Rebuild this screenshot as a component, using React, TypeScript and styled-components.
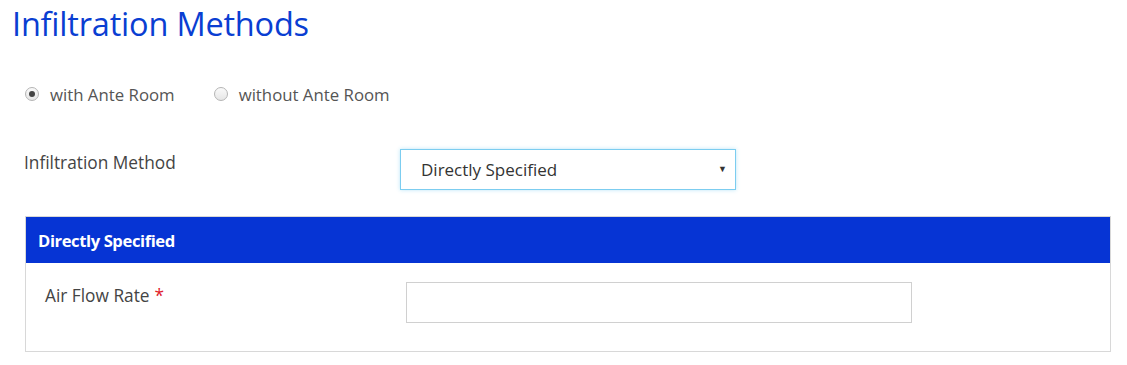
import React, { useState } from 'react';
import styled, { createGlobalStyle } from 'styled-components';

const GlobalStyle = createGlobalStyle`
    body {
        margin: 0;
        background: #fff;
        font-family: 'Open Sans', 'Noto Sans', sans-serif;
        color: #444;
    }
`;

const Page = styled.div`
    padding: 4px 16px 0 12px;
    width: 1100px;
`;

const Title = styled.h1`
    margin: 0;
    font-size: 32.5px;
    font-weight: 500;
    color: #0a3ed2;
    letter-spacing: -0.2px;
    line-height: 40px;
`;

const RadioRow = styled.div`
    display: flex;
    gap: 39px;
    margin: 35px 0 0 13px;
    height: 30px;
    align-items: center;
`;

const RadioLabel = styled.label`
    display: flex;
    align-items: center;
    gap: 11px;
    font-size: 16.8px;
    color: #555;
    cursor: pointer;
`;

const RadioDot = styled.span<{ checked: boolean }>`
    width: 12px;
    height: 12px;
    border-radius: 50%;
    border: 1px solid #b5b5b5;
    background: linear-gradient(#fafafa, #e6e6e6);
    display: flex;
    align-items: center;
    justify-content: center;
    &::after {
        content: '';
        width: 6px;
        height: 6px;
        border-radius: 50%;
        background: ${(props) => (props.checked ? '#444' : 'transparent')};
    }
`;

const FormRow = styled.div`
    display: grid;
    grid-template-columns: 376px 336px;
    align-items: start;
    margin: 40px 0 0 12px;
`;

const Label = styled.div`
    font-size: 17.3px;
    color: #444;
    padding-top: 2px;
`;

const Select = styled.div`
    height: 39px;
    border: 1px solid #7ccdf0;
    box-shadow: 0 0 4px rgba(102, 200, 240, 0.45);
    display: flex;
    align-items: center;
    justify-content: space-between;
    padding: 0 8px 0 20px;
    font-size: 17px;
    color: #333;
`;

const Caret = styled.span`
    font-size: 9px;
    color: #333;
    margin-top: -2px;
`;

const Panel = styled.div`
    margin: 26px 0 0 13px;
    width: 1084px;
    border: 1px solid #d8d8d8;
`;

const PanelHeader = styled.div`
    background: #0634d4;
    color: #fff;
    font-weight: 700;
    font-size: 16.6px;
    height: 46px;
    display: flex;
    align-items: center;
    padding-left: 12px;
    letter-spacing: -0.4px;
`;

const PanelBody = styled.div`
    display: grid;
    grid-template-columns: 361px 506px;
    padding: 19px 19px 28px;
`;

const Required = styled.span`
    color: #e0202a;
    margin-left: 5px;
`;

const Input = styled.input`
    height: 41px;
    box-sizing: border-box;
    border: 1px solid #d0d0d0;
    font-size: 15px;
    padding: 0 10px;
    outline: none;
`;

export default function App() {
    const [ante, setAnte] = useState(true);
    return (
        <>
            <GlobalStyle />
            <Page>
                <Title>Infiltration Methods</Title>
                <RadioRow>
                    <RadioLabel onClick={() => setAnte(true)}>
                        <RadioDot checked={ante} />
                        with Ante Room
                    </RadioLabel>
                    <RadioLabel onClick={() => setAnte(false)}>
                        <RadioDot checked={!ante} />
                        without Ante Room
                    </RadioLabel>
                </RadioRow>
                <FormRow>
                    <Label>Infiltration Method</Label>
                    <Select>
                        Directly Specified
                        <Caret>▼</Caret>
                    </Select>
                </FormRow>
                <Panel>
                    <PanelHeader>Directly Specified</PanelHeader>
                    <PanelBody>
                        <Label>
                            Air Flow Rate<Required>*</Required>
                        </Label>
                        <Input />
                    </PanelBody>
                </Panel>
            </Page>
        </>
    );
}
